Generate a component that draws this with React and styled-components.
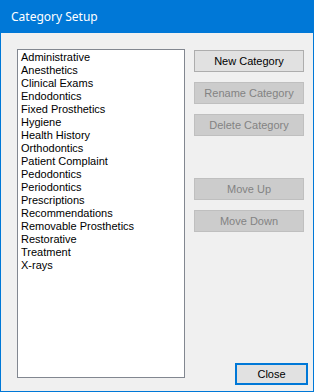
import React from "react";
import styled, { createGlobalStyle } from "styled-components";

const Global = createGlobalStyle`
  html, body { margin: 0; padding: 0; background: #f0f0f0; }
  * { box-sizing: border-box; }
`;

const Window = styled.div`
  width: 314px;
  height: 392px;
  border: 1px solid #0078d7;
  border-top: none;
  background: #f0f0f0;
  display: flex;
  flex-direction: column;
  font-family: "Liberation Sans", Arial, sans-serif;
  overflow: hidden;
`;

const TitleBar = styled.div`
  height: 33px;
  flex: none;
  background: #0078d7;
  color: #ffffff;
  display: flex;
  align-items: center;
  padding-left: 10px;
  padding-bottom: 1px;
  font-family: "Noto Sans", "Open Sans", sans-serif;
  font-size: 12px;
`;

const Body = styled.div`
  flex: 1;
  display: flex;
  padding: 16px 5px 6px 16px;
`;

const ListBox = styled.ul`
  list-style: none;
  margin: 0;
  width: 168px;
  height: 329px;
  flex: none;
  align-self: flex-start;
  border: 1px solid #828790;
  background: #ffffff;
  padding: 1px 0 0 3px;
`;

const Item = styled.li`
  font-size: 11px;
  line-height: 13px;
  height: 13px;
  color: #000000;
  white-space: nowrap;
`;

const Side = styled.div`
  flex: 1;
  margin-left: 9px;
  padding-top: 1px;
  display: flex;
  flex-direction: column;
  align-items: flex-start;
`;

const Group = styled.div`
  display: flex;
  flex-direction: column;
  gap: 10px;
  margin-top: ${(p) => p.$top || 0}px;
`;

const Button = styled.button`
  width: ${(p) => p.$w || 110}px;
  height: 22px;
  padding: 0;
  margin: 0;
  font-family: "Liberation Sans", Arial, sans-serif;
  font-size: 11px;
  line-height: 1;
  color: ${(p) => (p.disabled ? "#838383" : "#000000")};
  background: ${(p) => (p.disabled ? "#cccccc" : "#e1e1e1")};
  border: ${(p) =>
    p.$focus ? "2px solid #0078d7" : p.disabled ? "1px solid #bfbfbf" : "1px solid #adadad"};
  display: flex;
  align-items: center;
  justify-content: center;
`;

const CloseButton = styled(Button)`
  margin-top: auto;
  align-self: flex-end;
`;

const items = [
  "Administrative",
  "Anesthetics",
  "Clinical Exams",
  "Endodontics",
  "Fixed Prosthetics",
  "Hygiene",
  "Health History",
  "Orthodontics",
  "Patient Complaint",
  "Pedodontics",
  "Periodontics",
  "Prescriptions",
  "Recommendations",
  "Removable Prosthetics",
  "Restorative",
  "Treatment",
  "X-rays",
];

export default function App() {
  return (
    <>
      <Global />
      <Window>
        <TitleBar>Category Setup</TitleBar>
        <Body>
          <ListBox>
            {items.map((t) => (
              <Item key={t}>{t}</Item>
            ))}
          </ListBox>
          <Side>
            <Group>
              <Button>New Category</Button>
              <Button disabled>Rename Category</Button>
              <Button disabled>Delete Category</Button>
            </Group>
            <Group $top={42}>
              <Button disabled>Move Up</Button>
              <Button disabled>Move Down</Button>
            </Group>
            <CloseButton $w={73} $focus>Close</CloseButton>
          </Side>
        </Body>
      </Window>
    </>
  );
}
